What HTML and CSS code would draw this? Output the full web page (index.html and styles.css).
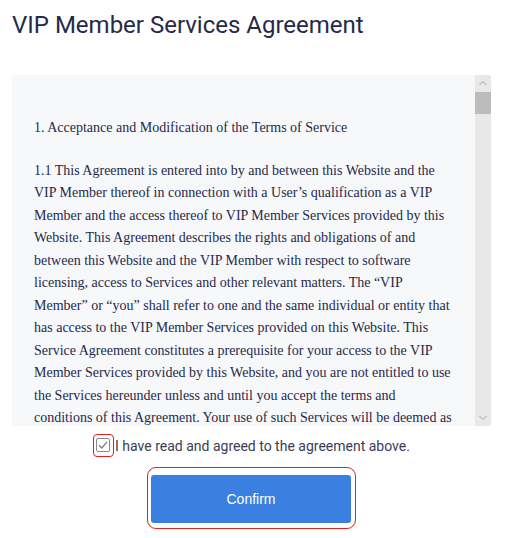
FILE: index.html
```html
<!DOCTYPE html>
<html lang="en">
<head>
<meta charset="utf-8">
<title>VIP Member Services Agreement</title>
<link rel="stylesheet" href="styles.css">
</head>
<body>
<main class="page">
  <h1 class="title">VIP Member Services Agreement</h1>
  <section class="agreement">
    <div class="agreement-body">
      <p>1. Acceptance and Modification of the Terms of Service</p>
      <p>1.1 This Agreement is entered into by and between this Website and the VIP Member thereof in connection with a User’s qualification as a VIP Member and the access thereof to VIP Member Services provided by this Website. This Agreement describes the rights and obligations of and between this Website and the VIP Member with respect to software licensing, access to Services and other relevant matters. The “VIP Member” or “you” shall refer to one and the same individual or entity that has access to the VIP Member Services provided on this Website. This Service Agreement constitutes a prerequisite for your access to the VIP Member Services provided by this Website, and you are not entitled to use the Services hereunder unless and until you accept the terms and conditions of this Agreement. Your use of such Services will be deemed as your acceptance of all the terms and conditions of this Agreement.</p>
      <p>1.2 This Website reserves the right to modify the terms and conditions of this Agreement from time to time as necessary.</p>
    </div>
    <div class="scrollbar" aria-hidden="true">
      <span class="scroll-btn"><svg viewBox="0 0 16 17" width="16" height="17"><polyline points="4.5,10 8,6.5 11.5,10" fill="none" stroke="#a3a3a3" stroke-width="1"/></svg></span>
      <span class="scroll-track"><span class="scroll-thumb"></span></span>
      <span class="scroll-btn"><svg viewBox="0 0 16 17" width="16" height="17"><polyline points="4.5,7 8,10.5 11.5,7" fill="none" stroke="#a3a3a3" stroke-width="1"/></svg></span>
    </div>
  </section>
  <label class="consent">
    <span class="focus-ring"><span class="checkbox"><svg viewBox="0 0 14 14" width="14" height="14" aria-hidden="true"><polyline points="3,7.2 5.8,10 11,3.8" fill="none" stroke="#7d7d7d" stroke-width="1.3"/></svg></span></span>
    <span class="consent-text">I have read and agreed to the agreement above.</span>
  </label>
  <div class="actions">
    <div class="button-ring"><button class="confirm" type="button">Confirm</button></div>
  </div>
</main>
</body>
</html>
```

FILE: styles.css
```css
html, body {
  margin: 0;
  padding: 0;
  background: #ffffff;
}

.page {
  display: flex;
  flex-direction: column;
  padding: 9px 16px 0 12px;
  font-family: Roboto, "Liberation Sans", sans-serif;
}

.title {
  margin: 0;
  font-family: Roboto, "Liberation Sans", sans-serif;
  font-weight: 400;
  font-size: 24px;
  line-height: 32px;
  color: #262a48;
}

.agreement {
  margin-top: 34px;
  height: 351px;
  display: flex;
  background: #f7f8fa;
  border-radius: 3px;
  overflow: hidden;
}

.agreement-body {
  flex: 1;
  min-width: 0;
  overflow: hidden;
  padding: 42px 20px 0 22px;
  font-family: "Liberation Serif", "Times New Roman", serif;
  font-size: 14px;
  line-height: 22.5px;
  color: #252a4a;
}

.agreement-body p {
  margin: 0 0 20px;
}

.scrollbar {
  width: 16px;
  flex: none;
  display: flex;
  flex-direction: column;
  background: #e8e8e8;
}

.scroll-btn {
  display: block;
  height: 17px;
  flex: none;
}

.scroll-btn svg {
  display: block;
}

.scroll-track {
  flex: 1;
  display: block;
}

.scroll-thumb {
  display: block;
  height: 22px;
  background: #bcbcbc;
}

.consent {
  margin-top: 8px;
  display: flex;
  align-items: center;
  justify-content: center;
  gap: 1px;
  font-size: 14px;
  color: #3a3d58;
}

.focus-ring {
  display: inline-flex;
  padding: 3px 3px 4px 2px;
  border: 1px solid #e32020;
  border-radius: 4px;
}

.checkbox {
  display: inline-flex;
  width: 12px;
  height: 12px;
  border: 1px solid #8a8a8a;
  border-radius: 2px;
  background: #ffffff;
}

.checkbox svg {
  display: block;
  margin: -1px;
}

.consent-text {
  line-height: 20px;
}

.actions {
  display: flex;
  justify-content: center;
  margin-top: 10px;
}

.button-ring {
  display: flex;
  padding: 7px 4px 5px 3px;
  border: 1px solid #e32020;
  border-radius: 9px;
}

.confirm {
  width: 200px;
  height: 48px;
  border: none;
  border-radius: 3px;
  background: #3a80e0;
  color: #ffffff;
  font-family: "Liberation Sans", Arial, sans-serif;
  font-size: 14px;
  cursor: pointer;
}
```
